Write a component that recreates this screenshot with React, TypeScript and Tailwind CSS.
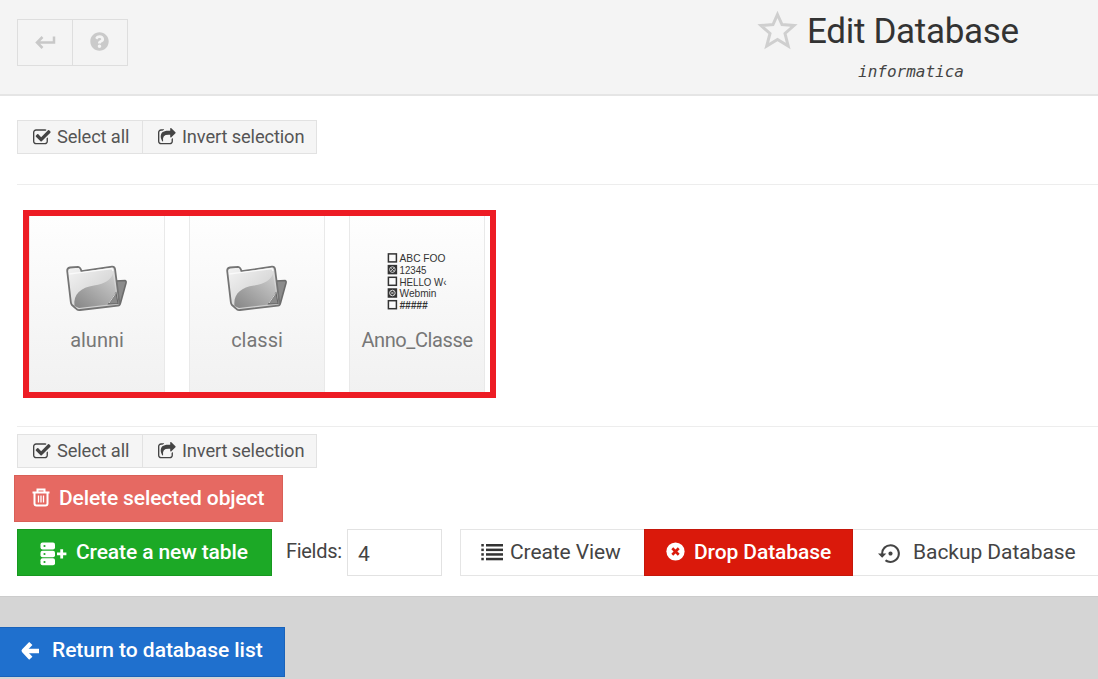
import React from "react";
import { FaQuestionCircle } from "react-icons/fa";
import { MdSettingsBackupRestore } from "react-icons/md";

function CheckSquare() {
  return (
    <svg viewBox="0 0 1792 1792" className="h-[19px] w-[19px] shrink-0 fill-[#444]">
      <path d="M1408 930v318q0 119-84.5 203.5t-203.5 84.5h-832q-119 0-203.5-84.5t-84.5-203.5v-832q0-119 84.5-203.5t203.5-84.5h832q63 0 117 25 15 7 18 23 3 17-9 29l-49 49q-10 10-23 10-3 0-9-2-23-6-45-6h-832q-66 0-113 47t-47 113v832q0 66 47 113t113 47h832q66 0 113-47t47-113v-254q0-13 9-22l64-64q10-10 23-10 6 0 12 3 20 8 20 29zm231-489l-814 814q-24 24-57 24t-57-24l-430-430q-24-24-24-57t24-57l110-110q24-24 57-24t57 24l263 263 647-647q24-24 57-24t57 24l110 110q24 24 24 57t-24 57z" />
    </svg>
  );
}

function ShareSquare() {
  return (
    <svg viewBox="0 0 1792 1792" className="h-[19px] w-[19px] shrink-0 fill-[#444]">
      <path d="M1408 989v259q0 119-84.5 203.5t-203.5 84.5h-832q-119 0-203.5-84.5t-84.5-203.5v-832q0-119 84.5-203.5t203.5-84.5h255q13 0 22.5 9.5t9.5 22.5q0 27-26 32-77 26-133 60-10 4-16 4h-112q-66 0-113 47t-47 113v832q0 66 47 113t113 47h832q66 0 113-47t47-113v-214q0-19 18-29 28-13 54-37 16-16 35-8 21 9 21 29zm237-496l-384 384q-18 19-45 19-12 0-25-5-39-17-39-59v-192h-160q-323 0-438 131-119 137-74 473 3 23-20 34-8 2-12 2-16 0-26-13-10-14-21-31t-39.5-68.5-49.5-99.5-38.5-114-17.5-122q0-49 3.5-91t14-90 28-88 47-81.5 68.5-74 94.5-61.5 124.5-48.5 159.5-30.5 196.5-11h160v-192q0-42 39-59 13-5 25-5 26 0 45 19l384 384q19 19 19 45t-19 45z" />
    </svg>
  );
}

function SelectionButtons() {
  return (
    <div className="flex h-[34px] w-[300px] border border-[#e2e2e2] bg-[#f5f5f5] text-[18.3px] leading-[29px] tracking-[-0.13px] text-[#555]">
      <div className="flex w-[125px] items-center border-r border-[#e2e2e2] pl-[15px]">
        <CheckSquare />
        <span className="-mt-0.5 ml-[5px] whitespace-nowrap">Select all</span>
      </div>
      <div className="flex flex-1 items-center pl-[15px]">
        <ShareSquare />
        <span className="-mt-0.5 ml-[5px] whitespace-nowrap">Invert selection</span>
      </div>
    </div>
  );
}

function Folder({ id }: { id: string }) {
  return (
    <svg viewBox="0 0 62 48" className="h-[48px] w-[62px]">
      <defs>
        <linearGradient id={id + "-front"} x1="0" y1="0" x2="1" y2="1">
          <stop offset="0" stopColor="#f4f4f4" />
          <stop offset="1" stopColor="#c4c4c4" />
        </linearGradient>
        <linearGradient id={id + "-shade"} x1="0" y1="1" x2="1" y2="0">
          <stop offset="0" stopColor="#858585" />
          <stop offset="1" stopColor="#d2d2d2" />
        </linearGradient>
      </defs>
      <path d="M50 16 L59 15.500 Q60.500 16 60 18 L54.500 38 Q54 40 51 40 L40 41Z" fill="#8b8b8b" stroke="#6c6c6c" strokeWidth="1.6" />
      <path d="M1.200 6 Q1 3 4 2.500 L12 1.800 Q14.500 2 15.500 6.200 L46 1.700 Q48.500 1.500 49 4 L53.500 39 Q54 40.500 52 40.700 L14 45 Q11.500 45.500 10 43.500 L6 40 Q5 39 4.800 37Z" fill={`url(#${id}-front)`} stroke="#747474" strokeWidth="1.8" />
      <path d="M3 9 L14 7.600 L46 3.500 L47 6" fill="none" stroke="#fafafa" strokeWidth="1.3" />
      <path d="M8.500 41 C7 29 15 22.500 28 20.500 C40 18.500 44 15 47 9 L51.500 38.500 L13 43Z" fill={`url(#${id}-shade)`} />
      <path d="M42.500 39 L50 28 L52 38.500Z" fill="#8a8a8a" stroke="#666" strokeWidth="1.1" />
      <path d="M43 38 L49.500 28.500" stroke="#e2e2e2" strokeWidth="0.9" />
    </svg>
  );
}

function FieldPreview() {
  const rows = ["ABC FOO", "12345", "HELLO W‹", "Webmin", "#####"];
  return (
    <svg viewBox="0 0 62 60" className="ml-0.5 h-[60px] w-[62px] overflow-visible">
      {rows.map((row, i) => (
        <g key={row}>
          <rect x="1.4" y={1.9 + i * 11.7} width="8" height="8" fill={i % 2 ? "#333" : "#fafafa"} stroke="#333" strokeWidth="1.5" />
          {i % 2 === 1 && (
            <>
              <circle cx="5.4" cy={5.9 + i * 11.7} r="2.8" fill="none" stroke="#e5e5e5" strokeWidth="0.9" />
              <path d={`M3.800 ${4.3 + i * 11.7}l3.200 3.200m0 -3.200l-3.200 3.200`} stroke="#ddd" strokeWidth="0.8" />
            </>
          )}
          <text
            x="12.5"
            y={10.3 + i * 11.7}
            textLength={[46, 27, 47, 37, 28][i]}
            lengthAdjust="spacingAndGlyphs"
            fill="#333"
            className={i === 4 ? "font-['Liberation_Sans'] text-[10px] font-bold italic" : "font-['Liberation_Sans'] text-[11.5px]"}
          >
            {row}
          </text>
        </g>
      ))}
    </svg>
  );
}

function Card({ label, children }: { label: React.ReactNode; children: React.ReactNode }) {
  return (
    <div className="flex h-full w-[136px] shrink-0 flex-col items-center border-x border-[#e9e9e9] bg-linear-to-b from-[#fefefe] to-[#f1f1f1]">
      <div className="flex h-[112px] items-end">{children}</div>
      <div className="whitespace-nowrap text-[20px] leading-6 text-[#777]">{label}</div>
    </div>
  );
}

export default function App() {
  return (
    <div className="h-[679px] w-[1098px] overflow-hidden bg-[#d5d5d5] font-[Roboto,sans-serif] text-[#444]">
      <header className="flex h-[96px] border-b-2 border-[#e5e5e5] bg-[#f4f4f4]">
        <div className="ml-[17px] mt-[19px] flex h-[47px] w-[111px] border border-[#dedede] text-[#cacaca]">
          <div className="flex w-[55px] items-center justify-center border-r border-[#dedede]">
            <svg viewBox="0 0 22 14" className="-mt-0.5 h-[14px] w-[22px] fill-none stroke-[#c8c8c8] stroke-[2.5]">
              <path d="M20 1.500V7.500H3M8.500 2L3 7.500L8.500 13" />
            </svg>
          </div>
          <div className="flex flex-1 items-center justify-center pb-[3px] pr-px">
            <FaQuestionCircle size={19} />
          </div>
        </div>
        <div className="ml-[597px] flex w-[373px] flex-col">
          <div className="mt-[8px] flex h-[45px] items-center pl-[31px]">
            <svg viewBox="0 0 42 42" className="-mt-[3px] h-[42px] w-[42px] fill-none stroke-[#cfcfcf] stroke-3">
              <path d="M21.500 6.500L26 16.500L38 17.500L29 25.500L32.200 38L21.500 31.500L10.700 38L14 25.500L5 17.500L17 16.500Z" />
            </svg>
            <h1 className="ml-[9px] whitespace-nowrap pt-px text-[35px] leading-[45px] tracking-[-0.3px] text-[#333]">Edit Database</h1>
          </div>
          <div className="ml-[133px] mt-[9px] font-['DejaVu_Sans_Mono',monospace] text-[16px] italic leading-5">informatica</div>
        </div>
      </header>
      <main className="h-[501px] border-b border-[#cccccc] bg-white pl-[17px] pt-[24px]">
        <SelectionButtons />
        <div className="mt-[30px] h-px bg-[#ededed]" />
        <div className="ml-[6px] mt-[25px] flex h-[188px] w-[473px] gap-[24px] border-6 border-[#ed1c24]">
          <Card label="alunni"><div className="pb-[15px]"><Folder id="alunni" /></div></Card>
          <Card label="classi"><div className="pb-[15px]"><Folder id="classi" /></div></Card>
          <Card label={<span className="tracking-[-0.4px]">Anno_Classe</span>}><div className="pb-[16px]"><FieldPreview /></div></Card>
        </div>
        <div className="mt-[28px] h-px bg-[#ededed]" />
        <div className="mt-[7px]"><SelectionButtons /></div>
        <button className="-ml-[3px] mt-[7px] flex h-[47px] w-[269px] items-center border border-[#d95f57] bg-[#e66962] pl-[17px] text-[21px] font-medium tracking-[-0.13px] text-white">
          <svg viewBox="0 0 18 19" className="-mt-0.5 h-[19px] w-[18px] fill-none stroke-white stroke-2">
            <path d="M0.500 4.500H17.500M5.500 4V1.500H12.500V4M2.500 4.500V15.500Q2.500 17.500 4.500 17.500H13.500Q15.500 17.500 15.500 15.500V4.500" />
            <path d="M6.500 7.500V14.500M9 7.500V14.500M11.500 7.500V14.500" strokeWidth="1.3" />
          </svg>
          <span className="ml-[9px] whitespace-nowrap">Delete selected object</span>
        </button>
        <div className="mt-[7px] flex h-[47px] w-[1100px]">
          <button className="flex w-[255px] items-center border border-[#179820] bg-[#1ca926] pl-[22px] text-[21px] font-medium tracking-[-0.12px] text-white">
            <svg viewBox="0 0 27 24" className="mt-0.5 h-[24px] w-[27px] shrink-0 fill-white">
              <rect x="0.500" y="0.500" width="14.500" height="7" rx="2" />
              <rect x="0.500" y="8.700" width="14.500" height="6.500" rx="2" />
              <rect x="0.500" y="16.300" width="14.500" height="7" rx="2" />
              <path d="M17 10.500h3.300v-3.200h2.800v3.200h3.300v2.800h-3.300v3.200h-2.800v-3.200H17Z" />
              <circle cx="4.500" cy="4" r="1.100" fill="#1ca926" />
              <circle cx="4.500" cy="12" r="1.100" fill="#1ca926" />
              <circle cx="4.500" cy="20" r="1.100" fill="#1ca926" />
            </svg>
            <span className="ml-[9px] whitespace-nowrap pt-px">Create a new table</span>
          </button>
          <label className="ml-[14px] w-[61px] whitespace-nowrap text-[20px] leading-[44px] tracking-[-0.3px] text-[#444]">Fields:</label>
          <div className="w-[95px] border border-[#e2e2e2] pl-[10px] text-[21px] leading-[48px]">4</div>
          <button className="ml-[18px] flex w-[184px] items-center border border-r-0 border-[#e5e5e5] pl-[20px] text-[21px] tracking-[-0.1px]">
            <svg viewBox="0 0 22 18" className="-mt-0.5 h-[18px] w-[22px] fill-[#333]">
              {[1, 5.6, 10.2, 14.8].map((y) => (
                <React.Fragment key={y}>
                  <rect x="0.300" y={y} width="2.500" height="2.500" />
                  <rect x="5" y={y} width="17" height="2.500" />
                </React.Fragment>
              ))}
            </svg>
            <span className="ml-[7px] whitespace-nowrap pt-px">Create View</span>
          </button>
          <button className="flex w-[209px] items-center border border-[#c5170b] bg-[#da190b] pl-[21px] text-[21px] font-medium tracking-[-0.1px] text-white">
            <svg viewBox="0 0 20 20" className="-mt-0.5 h-[19px] w-[19px]">
              <circle cx="10" cy="10" r="9.600" fill="white" />
              <path d="M6.600 6.600L13.400 13.400M13.400 6.600L6.600 13.400" stroke="#da190b" strokeWidth="2.800" />
            </svg>
            <span className="ml-[9px] whitespace-nowrap pt-px">Drop Database</span>
          </button>
          <button className="flex w-[260px] items-center border-y border-[#e5e5e5] pl-[25px] text-[21px]">
            <MdSettingsBackupRestore size={25} className="mt-0.5" />
            <span className="ml-[10px] whitespace-nowrap pt-px tracking-[-0.05px]">Backup Database</span>
          </button>
        </div>
      </main>
      <footer className="pt-[30px]">
        <button className="flex h-[50px] w-[285px] items-center border border-l-0 border-[#1963bb] bg-[#1f70ce] pl-[20px] text-[21px] font-medium tracking-[-0.05px] text-white">
          <svg viewBox="0 0 20 20" className="-mt-0.5 h-[20px] w-[20px] fill-none stroke-white stroke-[4.5]">
            <path d="M19 10H5" strokeLinecap="butt" />
            <path d="M10.800 2.500L3.800 9.800L10.800 17.200" strokeLinejoin="round" />
          </svg>
          <span className="-mt-[2px] ml-[12px] whitespace-nowrap">Return to database list</span>
        </button>
      </footer>
    </div>
  );
}
